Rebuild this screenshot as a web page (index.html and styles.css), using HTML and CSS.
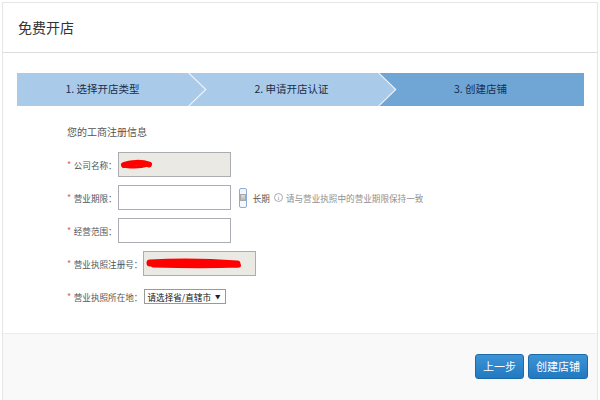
FILE: index.html
```html
<!DOCTYPE html>
<html lang="zh-CN">
<head>
<meta charset="utf-8">
<title>免费开店</title>
<link rel="stylesheet" href="styles.css">
</head>
<body>
<div class="panel">
  <div class="header"><h1 class="title">免费开店</h1></div>
  <div class="main">
    <div class="steps">
      <div class="step step-one"><div class="step-shape shape-one"><span>1. 选择开店类型</span></div></div>
      <div class="step step-two"><div class="step-shape shape-two"><span>2. 申请开店认证</span></div></div>
      <div class="step step-three"><span>3. 创建店铺</span></div>
    </div>
    <div class="form">
      <div class="section-title">您的工商注册信息</div>
      <div class="row">
        <span class="req">*</span><span class="label">公司名称：</span>
        <div class="field disabled">
          <svg class="redact" width="40" height="14" viewBox="0 0 40 14"><path d="M4 7 C10 4.5 22 4 29 6.5" stroke="#f00" stroke-width="6" stroke-linecap="round" fill="none"/><path d="M6 8.5 C14 9.5 22 9 28 7" stroke="#f00" stroke-width="3" stroke-linecap="round" fill="none"/></svg>
        </div>
      </div>
      <div class="row">
        <span class="req">*</span><span class="label">营业期限：</span>
        <div class="field"></div>
        <span class="checkbox"><span class="check-inner"></span></span>
        <span class="check-label">长期</span>
        <span class="info">i</span>
        <span class="hint">请与营业执照中的营业期限保持一致</span>
      </div>
      <div class="row">
        <span class="req">*</span><span class="label">经营范围：</span>
        <div class="field"></div>
      </div>
      <div class="row">
        <span class="req">*</span><span class="label">营业执照注册号：</span>
        <div class="field disabled">
          <svg class="redact" width="100" height="16" viewBox="0 0 100 16"><path d="M5 7 C30 5.5 60 5.5 92 8" stroke="#f00" stroke-width="7" stroke-linecap="round" fill="none"/><path d="M8 9.5 C40 10.5 70 10.5 94 9.5" stroke="#f00" stroke-width="4" stroke-linecap="round" fill="none"/></svg>
        </div>
      </div>
      <div class="row">
        <span class="req">*</span><span class="label">营业执照所在地：</span>
        <div class="select"><span class="select-text">请选择省/直辖市</span><span class="arrow">▼</span></div>
      </div>
    </div>
  </div>
  <div class="footer">
    <button class="btn btn-prev" type="button">上一步</button>
    <button class="btn btn-create" type="button">创建店铺</button>
  </div>
</div>
</body>
</html>
```
FILE: styles.css
```css
* { box-sizing: border-box; }
html, body { margin: 0; padding: 0; background: #fff; }
body {
  font-family: "Noto Sans CJK SC", "Noto Sans", sans-serif;
  width: 600px;
  height: 400px;
  overflow: hidden;
}
.panel {
  margin: 2px 2px 0 2px;
  height: 398px;
  border: 1px solid #e6e6e6;
  border-bottom: none;
  display: flex;
  flex-direction: column;
}
.header {
  height: 50px;
  border-bottom: 1px solid #dcdcdc;
  display: flex;
  align-items: center;
  padding-left: 15px;
  padding-bottom: 1px;
}
.title {
  margin: 0;
  font-size: 14px;
  font-weight: normal;
  color: #333;
  line-height: 20px;
}
.main { height: 280px; }
.steps {
  display: flex;
  width: 567px;
  height: 33px;
  margin: 20px 0 0 14px;
  background: #6fa6d6;
}
.step {
  display: flex;
  height: 100%;
  font-size: 10.5px;
  color: #1a2d4c;
  line-height: 1;
}
.step-shape {
  height: 100%;
  background: #a9cbe9;
  display: flex;
  align-items: center;
  justify-content: center;
}
.step-one {
  width: 189.5px;
  flex: none;
  background: #f4f8fc;
  clip-path: polygon(0 0, 172.5px 0, 189.5px 50%, 172.5px 100%, 0 100%);
  z-index: 3;
}
.shape-one {
  width: 188px;
  padding-right: 17px;
  clip-path: polygon(0 0, 171px 0, 188px 50%, 171px 100%, 0 100%);
}
.step-two {
  width: 208.5px;
  flex: none;
  margin-left: -18.5px;
  background: #f4f8fc;
  clip-path: polygon(0 0, 191.5px 0, 208.5px 50%, 191.5px 100%, 0 100%);
  z-index: 2;
}
.shape-two {
  width: 207px;
  padding: 0 17px;
  clip-path: polygon(0 0, 190px 0, 207px 50%, 190px 100%, 0 100%);
}
.step-three {
  flex: 1;
  margin-left: -19.5px;
  align-items: center;
  justify-content: center;
  z-index: 1;
}
.form { padding-left: 64px; }
.section-title {
  margin-top: 20px;
  font-size: 10px;
  line-height: 12px;
  color: #555;
  margin-bottom: 14px;
}
.row {
  display: flex;
  align-items: center;
  height: 25px;
  margin-bottom: 8px;
  font-size: 8.6px;
  color: #555;
}
.req {
  color: #e8605a;
  font-size: 9px;
  margin-right: 2.5px;
}
.label { white-space: nowrap; }
.field {
  width: 113px;
  height: 25px;
  border: 1px solid #abadb3;
  background: #fff;
  margin-left: 1px;
  display: flex;
  align-items: center;
  padding-left: 1px;
}
.field.disabled { background: #ebe9e4; }
.redact { display: block; }
.checkbox {
  width: 8px;
  height: 20px;
  margin-left: 8px;
  border: 1px solid #89acdf;
  border-radius: 2px;
  display: flex;
  align-items: center;
  justify-content: center;
  background: #f4f7fc;
}
.check-inner {
  width: 6px;
  height: 7px;
  background: linear-gradient(#dcdcdc, #b8b8b8);
  border: 1px solid #a8a8a8;
}
.check-label { margin-left: 6px; color: #555; }
.info {
  width: 9px;
  height: 9px;
  border: 1px solid #aaa;
  border-radius: 50%;
  margin-left: 4px;
  font-size: 6px;
  line-height: 7px;
  text-align: center;
  color: #999;
  font-family: "DejaVu Serif", serif;
}
.hint { margin-left: 3px; color: #8f8f8f; }
.select {
  margin-left: 2px;
  width: 82px;
  height: 15px;
  border: 1px solid #9a9a9a;
  background: #fff;
  display: flex;
  align-items: center;
  justify-content: space-between;
  padding: 0 5px 0 2px;
  color: #111;
  font-size: 8.6px;
  white-space: nowrap;
}
.arrow { font-size: 5.5px; color: #222; }
.footer {
  flex: 1;
  border-top: 1px solid #ececec;
  background: #f9f9f9;
  display: flex;
  justify-content: flex-end;
  align-items: flex-start;
  padding: 20px 9px 0 0;
  gap: 4px;
}
.btn {
  height: 25px;
  border: 1px solid #1d6aa9;
  border-radius: 3px;
  background: linear-gradient(#3d93d6, #2179c0);
  color: #fff;
  font-family: "Noto Sans CJK SC", sans-serif;
  font-size: 11px;
  padding: 0;
  line-height: 1;
}
.btn-prev { width: 49px; }
.btn-create { width: 60px; }
```
